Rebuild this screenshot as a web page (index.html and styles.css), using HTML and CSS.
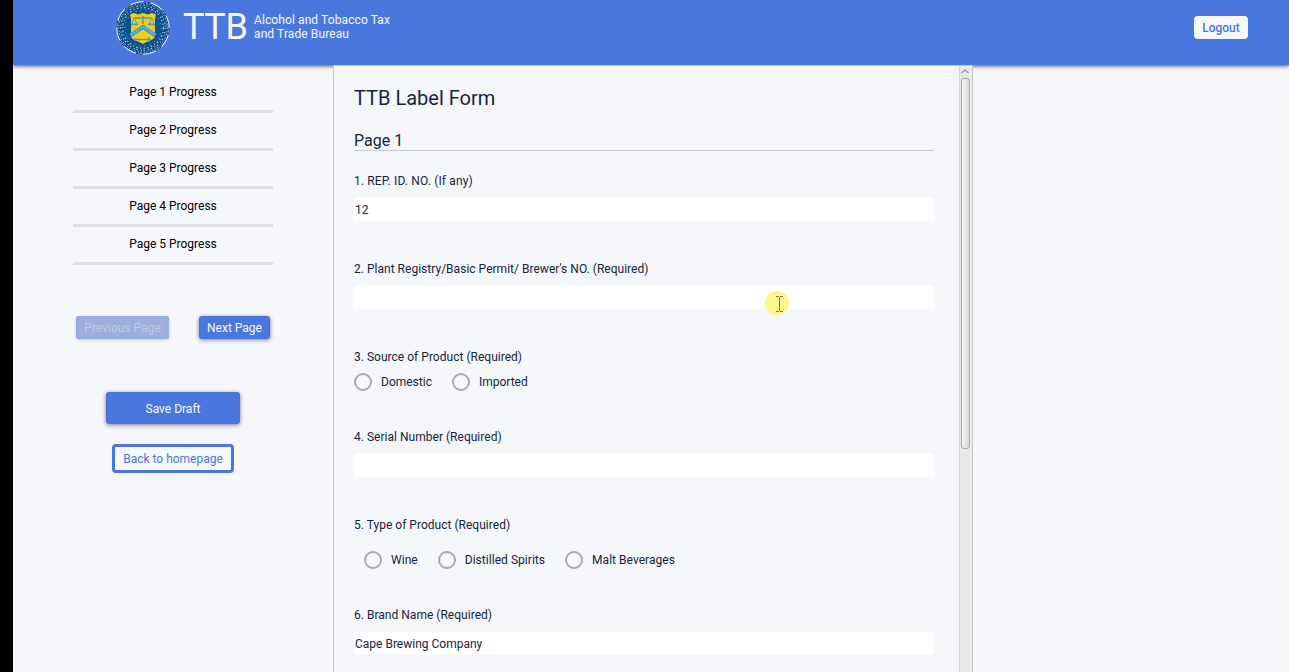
FILE: index.html
```html
<!DOCTYPE html>
<html lang="en">
<head>
<meta charset="utf-8">
<title>TTB Label Form</title>
<link rel="stylesheet" href="styles.css">
</head>
<body>
<div class="app">
  <header class="header">
    <div class="brand">
      <svg class="seal" viewBox="0 0 56 56" width="56" height="56" aria-hidden="true">
        <circle cx="28" cy="28" r="26.700" fill="#e9edf5"/>
        <circle cx="28" cy="28" r="26.300" fill="none" stroke="#26335c" stroke-width="1" stroke-dasharray="7 13.650"/>
        <circle cx="28" cy="28" r="25.700" fill="#0d5290"/>
        <g fill="none" stroke="#c3d3de">
          <circle cx="28" cy="28" r="24.300" stroke-width="1" stroke-dasharray="1 2.300 1.300 1.400"/>
          <circle cx="28" cy="28" r="22.300" stroke-width="1.100" stroke-dasharray="1 3.100 1.400 1.700"/>
          <circle cx="28" cy="28" r="20.300" stroke-width="1.100" stroke-dasharray="1.500 2.600 1 2.300"/>
          <circle cx="28" cy="28" r="18" stroke-width=".9" stroke-dasharray="1 4.200 1.300 3.700" stroke="#8ca9b9"/>
        </g>
        <path d="M13 14h4l2-2 4 1 5-2 5 2 4-1 2 2h4l-1 5v15c0 6-8 7-14 11-6-4-14-5-14-11V19z" fill="#0d5290"/>
        <path d="M15 14.500l4-1.500 4 1.500 5-1.500 5 1.500 4-1.500 4 1.500-1 4.500v17c0 4-8 5-12 8-4-3-12-4-12-8V19z" fill="#fdcb0c"/>
        <g fill="none" stroke="#39a3d9">
          <path d="M19 18h18M28 16v8" stroke-width="1.500"/>
          <path d="M19 18l-2 6h5zM37 18l-3 6h5z" stroke-width=".9"/>
          <path d="M16 24.500h7M33 24.500h7" stroke-width="1.500"/>
          <path d="M15.500 35.500L28 27l12.500 8.500" stroke-width="4"/>
          <path d="M19 39.500h17M20 38v3M34 37v5" stroke-width="1.500"/>
        </g>
        <path d="M16 34.700L28 26.500l12 8.200" fill="none" stroke="#d9efec" stroke-width=".8" stroke-dasharray="1 2"/>
      </svg>
      <span class="acronym">TTB</span>
      <span class="agency">Alcohol and Tobacco Tax<br>and Trade Bureau</span>
    </div>
    <button class="logout">Logout</button>
  </header>
  <div class="content">
    <nav class="sidebar">
      <ul class="progress">
        <li>Page 1 Progress</li>
        <li>Page 2 Progress</li>
        <li>Page 3 Progress</li>
        <li>Page 4 Progress</li>
        <li>Page 5 Progress</li>
      </ul>
      <div class="pager">
        <button class="btn" disabled>Previous Page</button>
        <button class="btn">Next Page</button>
      </div>
      <button class="btn save">Save Draft</button>
      <button class="home">Back to homepage</button>
    </nav>
    <main class="panel">
      <form class="form">
        <h1>TTB Label Form</h1>
        <h2>Page 1</h2>
        <div class="field"><label class="spaced">1. REP. ID. NO. (If any)</label><input type="text" value="12"></div>
        <div class="field"><label>2. Plant Registry/Basic Permit/ Brewer's NO. (Required)</label><input type="text"></div>
        <div class="field choices">
          <label>3. Source of Product (Required)</label>
          <div class="options"><span class="option"><i></i>Domestic</span><span class="option"><i></i>Imported</span></div>
        </div>
        <div class="field"><label>4. Serial Number (Required)</label><input type="text"></div>
        <div class="field choices">
          <label>5. Type of Product (Required)</label>
          <div class="options inset"><span class="option"><i></i>Wine</span><span class="option"><i></i>Distilled Spirits</span><span class="option"><i></i>Malt Beverages</span></div>
        </div>
        <div class="field"><label>6. Brand Name (Required)</label><input type="text" value="Cape Brewing Company"></div>
      </form>
      <div class="scrollbar">
        <svg width="9" height="5" viewBox="0 0 9 5"><path d="M.5 4L4 1l3.500 3" fill="none" stroke="#999" stroke-width="1.300"/></svg>
        <div class="thumb"></div>
      </div>
    </main>
  </div>
</div>
<svg class="pointer" width="24" height="24" viewBox="0 0 24 24" aria-hidden="true">
  <circle cx="12" cy="12" r="12" fill="#fdf78a"/>
  <path d="M11 5.500h3M15 5.500h3M11 20.500h3M15 20.500h3M14.500 6v14" fill="none" stroke="#85794a"/>
</svg>
</body>
</html>
```

FILE: styles.css
```css
* { box-sizing: border-box; }
body {
  margin: 0;
  height: 672px;
  overflow: hidden;
  padding-left: 13px;
  background: #000;
  font: 12px/16px Roboto, sans-serif;
  color: #172440;
}
button, input { font: inherit; border: 0; margin: 0; }
.app { height: 672px; background: #f6f7fb; display: flex; flex-direction: column; }
.header {
  height: 65px;
  flex: none;
  background: #4a77dd;
  box-shadow: 0 1px 4px rgba(0, 0, 0, .7);
  display: flex;
  justify-content: space-between;
  align-items: flex-start;
  padding: 0 41px 0 102px;
  color: #f6f7fb;
}
.brand { display: flex; align-items: flex-start; }
.seal { display: block; }
.acronym { font-size: 36px; line-height: 42px; letter-spacing: -.4px; margin: 6px 0 0 12px; width: 71px; white-space: nowrap; }
.agency { line-height: 14px; letter-spacing: .1px; margin-top: 13px; white-space: nowrap; }
.logout {
  width: 54px;
  height: 23px;
  margin-top: 16px;
  padding: 0;
  border-radius: 4px;
  background: #f6f7fb;
  color: #4a77dd;
  font-weight: 500;
}
.content { flex: 1; min-height: 0; display: flex; }
.sidebar { width: 320px; display: flex; flex-direction: column; align-items: center; padding-top: 10px; }
.progress { list-style: none; margin: 0 0 51px; padding: 0; width: 200px; color: #000; text-align: center; }
.progress li { height: 38px; line-height: 35px; border-bottom: 3px solid #e0e0e0; }
.pager { display: flex; gap: 30px; width: 194px; margin-bottom: 53px; }
.btn {
  height: 23px;
  padding: 0;
  border-radius: 3px;
  background: #4a77dd;
  color: #f6f7fb;
  box-shadow: 0 1px 4px rgba(0, 0, 0, .5);
  white-space: nowrap;
  width: 71px;
}
.btn:disabled { width: 93px; background: #9cafdd; color: #bdc8e3; box-shadow: inset 0 0 4px #8eaae5, 0 1px 3px rgba(0, 0, 0, .2); }
.save { width: 134px; height: 32px; padding-top: 1px; margin-bottom: 20px; }
.home {
  width: 122px;
  height: 29px;
  padding: 0;
  border: 3px solid #4a77dd;
  border-radius: 4px;
  background: #f6f7fb;
  color: #4a77dd;
  white-space: nowrap;
}
.panel { width: 640px; z-index: 1; background: #f6f7fb; border: 1px solid #c5c6c8; border-width: 1px 1px 0; display: flex; overflow: hidden; }
.form { flex: 1; padding: 20px 20px 0; border-right: 5px solid #f3f3f3; }
h1 { margin: 0 0 18px; font-size: 20px; line-height: 24px; font-weight: 400; }
h2 { margin: 0 0 22px; padding-top: 3px; height: 23px; font-size: 16px; line-height: 20px; font-weight: 400; border-bottom: 1px solid #c7c8cb; }
.field { display: flex; flex-direction: column; gap: 9px; margin-bottom: 40px; }
.field label { height: 16px; white-space: nowrap; letter-spacing: .02px; }
.field .spaced { letter-spacing: .14px; }
.field input { height: 23px; width: 100%; padding: 0 1px; background: #fff; border-radius: 3px; color: #172440; }
.choices { gap: 8px; margin-bottom: 38px; }
.options { display: flex; gap: 20px; }
.inset { padding: 10px 10px 0; }
.option { display: flex; align-items: center; gap: 9px; height: 18px; white-space: nowrap; }
.inset .option { letter-spacing: .04px; }
.option i { width: 18px; height: 18px; border: 2px solid #ababab; border-radius: 50%; }
.scrollbar { width: 13px; flex: none; background: #e9e9e9; border-left: 1px solid #d5d5d5; border-right: 2px solid #eee; padding: 3px 0 0 1px; }
.scrollbar svg { display: block; }
.thumb { width: 9px; height: 371px; margin-top: 4px; border: 1px solid #aaa; border-radius: 3px; background: linear-gradient(90deg, #f5f5f5, #d9d9d9); }
.pointer { position: absolute; left: 765px; top: 291px; z-index: 2; }
```
